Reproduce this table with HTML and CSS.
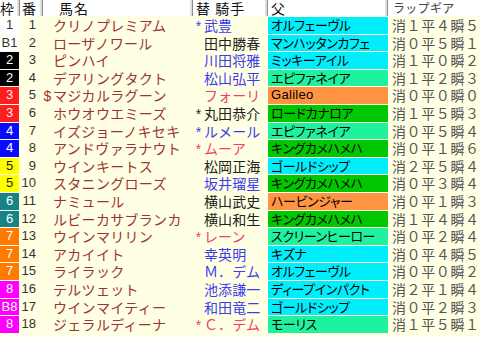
FILE: index.html
```html
<!DOCTYPE html>
<html lang="ja">
<head>
<meta charset="utf-8">
<link rel="stylesheet" href="styles.css">
</head>
<body>
<div class="sheet">
  <div class="hd hc-waku">枠</div>
  <div class="hd hc-ban">番</div>
  <div class="hd hc-name">馬名</div>
  <div class="hd hc-jk">替 騎手</div>
  <div class="hd hc-sire">父</div>
  <div class="hd hc-lap">ラップギア</div>

  <div class="waku w1">1</div><div class="ban">1</div><div class="name">クリノプレミアム</div><div class="jk jb"><span class="mk">*</span>武豊</div><div class="sire sc">オルフェーヴル</div><div class="lap">消１平４瞬５</div>
  <div class="waku w1">B1</div><div class="ban">2</div><div class="name">ローザノワール</div><div class="jk jn">田中勝春</div><div class="sire sc">マンハッタンカフェ</div><div class="lap">消０平５瞬１</div>
  <div class="waku w2">2</div><div class="ban">3</div><div class="name">ピンハイ</div><div class="jk jb">川田将雅</div><div class="sire sc">ミッキーアイル</div><div class="lap">消１平０瞬２</div>
  <div class="waku w2">2</div><div class="ban">4</div><div class="name">デアリングタクト</div><div class="jk jb">松山弘平</div><div class="sire sm">エピファネイア</div><div class="lap">消１平２瞬３</div>
  <div class="waku w3">3</div><div class="ban">5</div><div class="name"><span class="mk">$</span>マジカルラグーン</div><div class="jk jr">フォーリ</div><div class="sire so latin">Galileo</div><div class="lap">消０平０瞬０</div>
  <div class="waku w3">3</div><div class="ban">6</div><div class="name">ホウオウエミーズ</div><div class="jk jn"><span class="mk">*</span>丸田恭介</div><div class="sire sg">ロードカナロア</div><div class="lap">消１平５瞬３</div>
  <div class="waku w4">4</div><div class="ban">7</div><div class="name">イズジョーノキセキ</div><div class="jk jb"><span class="mk">*</span>ルメール</div><div class="sire sm">エピファネイア</div><div class="lap">消０平５瞬４</div>
  <div class="waku w4">4</div><div class="ban">8</div><div class="name">アンドヴァラナウト</div><div class="jk jr"><span class="mk">*</span>ムーア</div><div class="sire sg">キングカメハメハ</div><div class="lap">消０平１瞬６</div>
  <div class="waku w5">5</div><div class="ban">9</div><div class="name">ウインキートス</div><div class="jk jn">松岡正海</div><div class="sire sc">ゴールドシップ</div><div class="lap">消２平５瞬４</div>
  <div class="waku w5">5</div><div class="ban">10</div><div class="name">スタニングローズ</div><div class="jk jb">坂井瑠星</div><div class="sire sg">キングカメハメハ</div><div class="lap">消０平３瞬４</div>
  <div class="waku w6">6</div><div class="ban">11</div><div class="name">ナミュール</div><div class="jk jn">横山武史</div><div class="sire so">ハービンジャー</div><div class="lap">消０平１瞬３</div>
  <div class="waku w6">6</div><div class="ban">12</div><div class="name">ルビーカサブランカ</div><div class="jk jn">横山和生</div><div class="sire sg">キングカメハメハ</div><div class="lap">消１平４瞬４</div>
  <div class="waku w7">7</div><div class="ban">13</div><div class="name">ウインマリリン</div><div class="jk jr"><span class="mk">*</span>レーン</div><div class="sire sm">スクリーンヒーロー</div><div class="lap">消０平２瞬４</div>
  <div class="waku w7">7</div><div class="ban">14</div><div class="name">アカイイト</div><div class="jk jb">幸英明</div><div class="sire sc">キズナ</div><div class="lap">消０平４瞬５</div>
  <div class="waku w7">7</div><div class="ban">15</div><div class="name">ライラック</div><div class="jk jb">Ｍ．デム</div><div class="sire sc">オルフェーヴル</div><div class="lap">消０平０瞬２</div>
  <div class="waku w8">8</div><div class="ban">16</div><div class="name">テルツェット</div><div class="jk jb">池添謙一</div><div class="sire sc">ディープインパクト</div><div class="lap">消２平１瞬４</div>
  <div class="waku w8">B8</div><div class="ban">17</div><div class="name">ウインマイティー</div><div class="jk jb">和田竜二</div><div class="sire sc">ゴールドシップ</div><div class="lap">消０平２瞬３</div>
  <div class="waku w8">8</div><div class="ban">18</div><div class="name">ジェラルディーナ</div><div class="jk jr"><span class="mk">*</span>Ｃ．デム</div><div class="sire sm">モーリス</div><div class="lap">消１平５瞬１</div>
</div>
</body>
</html>
```

FILE: styles.css
```css
html, body {
  margin: 0;
  padding: 0;
  background: #ffffe3;
}
body {
  width: 480px;
  height: 337px;
  overflow: hidden;
  font-family: "Noto Sans CJK JP", "Noto Sans", sans-serif;
}
.sheet {
  display: grid;
  grid-template-columns: 20px 23px 150px 75px 120px 92px;
  grid-template-rows: 16px;
  grid-auto-rows: 16.6px;
  row-gap: 1px;
  background: #ffffe3;
}
.hd {
  background: #ffffff;
  font-size: 14px;
  line-height: 16px;
  color: #111;
  white-space: nowrap;
  overflow: hidden;
  border-right: 1px solid #8a8a8a;
  box-shadow: inset -2px 0 0 #e0e0e0;
}
.hc-waku { padding-left: 0; }
.hc-ban { padding-left: 2px; }
.hc-name { padding-left: 16px; letter-spacing: 1px; }
.hc-jk { padding-left: 3px; letter-spacing: 1px; }
.hc-sire { padding-left: 3px; }
.hc-lap {
  border-right: none;
  box-shadow: none;
  padding-left: 5px;
  font-size: 12px;
  color: #444;
  letter-spacing: 0.3px;
}

.waku, .ban, .name, .jk, .sire, .lap {
  font-size: 14px;
  line-height: 16.6px;
  white-space: nowrap;
  overflow: hidden;
}
.waku {
  text-align: center;
  font-family: "Liberation Sans", "Noto Sans", sans-serif;
  font-size: 13px;
  margin-right: 1px;
}
.w1 { background: #ffffff; color: #333; }
.w2 { background: #000000; color: #fff; }
.w3 { background: #ff1e1e; color: #ffe8e8; }
.w4 { background: #0a0aff; color: #fff; }
.w5 { background: #ffff00; color: #222; }
.w6 { background: #168484; color: #fff; }
.w7 { background: #ff7b00; color: #fff; }
.w8 { background: #ff00ff; color: #fff; }

.ban {
  text-align: right;
  padding-right: 7px;
  margin-left: -1px;
  font-family: "Liberation Sans", "Noto Sans", sans-serif;
  font-size: 13px;
  color: #333;
}
.name {
  padding-left: 10px;
  color: #9b3434;
  letter-spacing: 0.3px;
}
.mk {
  display: inline-block;
  width: 9px;
  margin-left: -10px;
  margin-right: 1px;
  font-family: "Liberation Sans", sans-serif;
  text-align: center;
}
.jk {
  padding-left: 11px;
  letter-spacing: 0.1px;
}
.jb { color: #3c3cf0; }
.jn { color: #222; }
.jr { color: #f23c6a; }

.sire {
  padding-left: 3px;
  font-size: 13px;
  color: #000;
  font-feature-settings: "palt";
  letter-spacing: -0.4px;
}
.latin { font-family: "Liberation Sans", sans-serif; font-size: 13px; letter-spacing: 0.3px; }
.sc { background: #00eefc; }
.sm { background: #1ef29e; }
.sg { background: #00c800; }
.so { background: #ff9444; }

.lap {
  padding-left: 4px;
  color: #555;
  letter-spacing: 0.6px;
}
```
